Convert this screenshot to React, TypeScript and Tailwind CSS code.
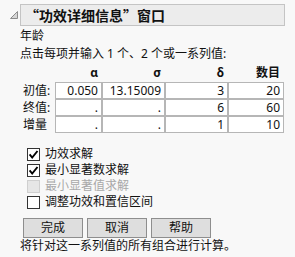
import React from "react";

// ─── Constants ────────────────────────────────────────────────────────────────

const bodyFont = { fontFamily: '"Noto Sans", "Noto Sans CJK SC", sans-serif' };
const cjkFont = { fontFamily: '"Noto Sans CJK SC", "Noto Sans", sans-serif' };

const gridCols = "grid grid-cols-[45px_61px_61px_54px] gap-x-[2px]";

const rows: { label: string; values: string[] }[] = [
  { label: "初值:", values: ["0.050", "13.15009", "3", "20"] },
  { label: "终值:", values: [".", ".", "6", "60"] },
  { label: "增量", values: [".", ".", "1", "10"] },
];

const options = [
  { label: "功效求解", checked: true, disabled: false },
  { label: "最小显著数求解", checked: true, disabled: false },
  { label: "最小显著值求解", checked: false, disabled: true },
  { label: "调整功效和置信区间", checked: false, disabled: false },
];

// ─── Checkbox ─────────────────────────────────────────────────────────────────

function Check({ checked, disabled }: { checked: boolean; disabled: boolean }) {
  return (
    <span
      className={`w-[13px] h-[13px] shrink-0 border flex items-center justify-center ${
        disabled ? "bg-[#e6e6e6] border-[#cfcfcf]" : "bg-white border-[#333333]"
      }`}
    >
      {checked && (
        <svg width="11" height="11" viewBox="0 0 11 11">
          <path d="M1.6 5.4 L4.2 8.5 L9.5 2" fill="none" stroke="#000" strokeWidth="1.9" />
        </svg>
      )}
    </span>
  );
}

// ─── Page ─────────────────────────────────────────────────────────────────────

export default function App() {
  return (
    <div className="w-[295px] h-[257px] bg-[#f8f8f8] text-[#111] overflow-hidden text-[12px]" style={bodyFont}>
      {/* Title */}
      <div className="flex items-start pt-[4px]">
        <svg width="20" height="22" viewBox="0 0 20 22" className="shrink-0">
          <polygon points="17.5,7.5 17.5,14.5 10.5,14.5" fill="#d6d6d6" stroke="#8c8c8c" strokeWidth="1" />
        </svg>
        <div
          className="w-[265px] h-[22px] bg-[#ececec] border border-[#c4c4c4] pl-[4px] flex items-center text-[14px] font-bold"
          style={cjkFont}
        >
          “功效详细信息”窗口
        </div>
      </div>

      <div className="pl-[20px]">
        <p className="mt-[2px] leading-[16px]">年龄</p>
        <p className="mt-[2px] leading-[16px]">点击每项并输入 1 个、2 个或一系列值:</p>

        {/* Table */}
        <div className="flex mt-[3px]">
          <div className="w-[35px] shrink-0" />
          <div className={`${gridCols} px-px leading-[16px] font-bold`}>
            {["α", "σ", "δ", "数目"].map((h) => (
              <span key={h} className="text-right pr-[3px]">{h}</span>
            ))}
          </div>
        </div>

        <div className="flex mt-px">
          <div className="w-[35px] shrink-0 flex flex-col gap-y-[2px] py-px">
            {rows.map((r) => (
              <span key={r.label} className="h-[15px] leading-[15px] pl-[3px]">{r.label}</span>
            ))}
          </div>
          <div className={`${gridCols} gap-y-[2px] bg-[#b6b6b6] p-px`}>
            {rows.flatMap((r) =>
              r.values.map((v, i) => (
                <span key={r.label + i} className="h-[15px] leading-[15px] bg-white text-right pr-[3px]">
                  {v}
                </span>
              ))
            )}
          </div>
        </div>

        {/* Options */}
        <div className="mt-[13px] pl-[7px]">
          {options.map((o) => (
            <label key={o.label} className="h-[16px] flex items-center gap-[5px]">
              <Check checked={o.checked} disabled={o.disabled} />
              <span className={o.disabled ? "text-[#a8a8a8]" : ""}>{o.label}</span>
            </label>
          ))}
        </div>

        {/* Buttons */}
        <div className="mt-[8px] pl-[3px] flex gap-[4px]">
          {["完成", "取消", "帮助"].map((b) => (
            <button
              key={b}
              className="w-[60px] h-[20px] bg-[#dedede] border border-[#8e8e8e] flex items-center justify-center leading-none"
            >
              {b}
            </button>
          ))}
        </div>

        <p className="leading-[16px]">将针对这一系列值的所有组合进行计算。</p>
      </div>
    </div>
  );
}
